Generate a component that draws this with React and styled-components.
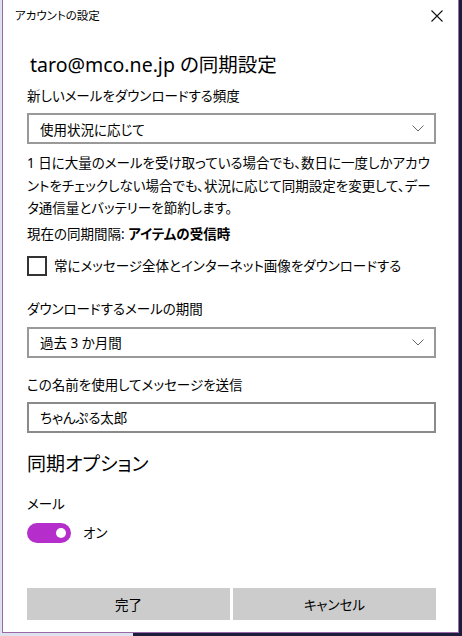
import React from "react";
import styled, { createGlobalStyle } from "styled-components";

const GlobalStyle = createGlobalStyle`
  html, body {
    margin: 0;
    padding: 0;
  }
  body {
    background: linear-gradient(to right, #dde2ee 0 133px, #1b1d3a 133px);
    font-family: "Noto Sans", "Noto Sans CJK JP", sans-serif;
    font-feature-settings: "palt";
    color: #000;
  }
`;

const Chevron = () => (
  <svg width="12" height="7" viewBox="0 0 12 7">
    <path d="M0.5 0.5 L6 6 L11.5 0.5" fill="none" stroke="#666" strokeWidth="1" />
  </svg>
);

const CloseIcon = () => (
  <svg width="12" height="12" viewBox="0 0 12 12">
    <path d="M0.5 0.5 L11.5 11.5 M11.5 0.5 L0.5 11.5" stroke="#111" strokeWidth="1.1" />
  </svg>
);

const App = () => {
  return (
    <>
      <GlobalStyle />
      <Backdrop>
        <Dialog>
          <TitleBar>
            <Title>アカウントの設定</Title>
            <CloseButton>
              <CloseIcon />
            </CloseButton>
          </TitleBar>
          <Content>
            <Heading>taro@mco.ne.jp の同期設定</Heading>

            <FieldLabel $mt={7}>新しいメールをダウンロードする頻度</FieldLabel>
            <Select $mt={7}>
              <span>使用状況に応じて</span>
              <Chevron />
            </Select>

            <Paragraph>
              1 日に大量のメールを受け取っている場合でも、数日に一度しかアカウ
              <br />
              ントをチェックしない場合でも、状況に応じて同期設定を変更して、デー
              <br />
              タ通信量とバッテリーを節約します。
            </Paragraph>

            <FieldLabel $mt={4}>
              現在の同期間隔: <strong>アイテムの受信時</strong>
            </FieldLabel>

            <CheckRow>
              <CheckBox />
              <span>常にメッセージ全体とインターネット画像をダウンロードする</span>
            </CheckRow>

            <FieldLabel $mt={23}>ダウンロードするメールの期間</FieldLabel>
            <Select $mt={8}>
              <span>過去 3 か月間</span>
              <Chevron />
            </Select>

            <FieldLabel $mt={17}>この名前を使用してメッセージを送信</FieldLabel>
            <TextInput $mt={7}>ちゃんぷる太郎</TextInput>

            <SectionHeading>同期オプション</SectionHeading>

            <FieldLabel $mt={17}>メール</FieldLabel>
            <ToggleRow>
              <Toggle>
                <Knob />
              </Toggle>
              <span>オン</span>
            </ToggleRow>

            <Spacer />

            <ButtonRow>
              <Button>完了</Button>
              <Button>キャンセル</Button>
            </ButtonRow>
          </Content>
        </Dialog>
      </Backdrop>
    </>
  );
};

export default App;

const Backdrop = styled.div`
  height: 636px;
  padding-left: 2px;
  box-sizing: border-box;
`;

const Dialog = styled.div`
  width: 457px;
  height: 633px;
  box-sizing: border-box;
  background: #fff;
  border: 1px solid #9a6aa8;
  border-top: none;
  display: flex;
  flex-direction: column;
`;

const TitleBar = styled.div`
  height: 32px;
  flex-shrink: 0;
  display: flex;
  align-items: center;
  justify-content: space-between;
  padding-left: 12px;
  padding-right: 15px;
`;

const Title = styled.div`
  font-size: 11.5px;
  line-height: 16px;
`;

const CloseButton = styled.div`
  display: flex;
  width: 12px;
  height: 12px;
`;

const Content = styled.div`
  flex: 1;
  display: flex;
  flex-direction: column;
  padding: 0 22px 12px 24px;
`;

const Heading = styled.h1`
  margin: 19px 0 0 3px;
  font-size: 19.5px;
  line-height: 28px;
  font-weight: 400;
  white-space: nowrap;
`;

const FieldLabel = styled.div`
  margin-top: ${(p) => p.$mt}px;
  font-size: 13.5px;
  line-height: 20px;
  white-space: nowrap;

  strong {
    font-weight: 700;
  }
`;

const Select = styled.div`
  margin-top: ${(p) => p.$mt}px;
  height: 31px;
  box-sizing: border-box;
  border: 2px solid #999;
  display: flex;
  align-items: center;
  justify-content: space-between;
  padding: 0 10px 0 11px;
  font-size: 13.5px;
`;

const TextInput = styled.div`
  margin-top: ${(p) => p.$mt}px;
  height: 31px;
  box-sizing: border-box;
  border: 2px solid #8a8a8a;
  display: flex;
  align-items: center;
  padding: 0 11px;
  font-size: 13.5px;
`;

const Paragraph = styled.p`
  margin: 8px 0 0;
  font-size: 13.5px;
  line-height: 22.5px;
  white-space: nowrap;
`;

const CheckRow = styled.div`
  margin-top: 12px;
  display: flex;
  align-items: center;
  gap: 7px;
  font-size: 13.5px;
  line-height: 20px;
  white-space: nowrap;
`;

const CheckBox = styled.div`
  width: 20px;
  height: 20px;
  box-sizing: border-box;
  border: 2px solid #333;
  flex-shrink: 0;
`;

const SectionHeading = styled.h2`
  margin: 18px 0 0;
  font-size: 19px;
  line-height: 26px;
  font-weight: 400;
`;

const ToggleRow = styled.div`
  margin-top: 9px;
  display: flex;
  align-items: center;
  gap: 12px;
  font-size: 13.5px;
  line-height: 20px;
`;

const Toggle = styled.div`
  position: relative;
  width: 44px;
  height: 20px;
  border-radius: 10px;
  background: #b52ecb;
  flex-shrink: 0;
`;

const Knob = styled.div`
  position: absolute;
  top: 5px;
  right: 5px;
  width: 10px;
  height: 10px;
  border-radius: 50%;
  background: #fff;
`;

const Spacer = styled.div`
  flex: 1;
`;

const ButtonRow = styled.div`
  display: grid;
  grid-template-columns: 1fr 1fr;
  gap: 3px;
`;

const Button = styled.button`
  height: 32px;
  border: none;
  background: #cccccc;
  font-family: inherit;
  font-feature-settings: "palt";
  font-size: 13.5px;
  color: #000;
  padding: 0;
`;
